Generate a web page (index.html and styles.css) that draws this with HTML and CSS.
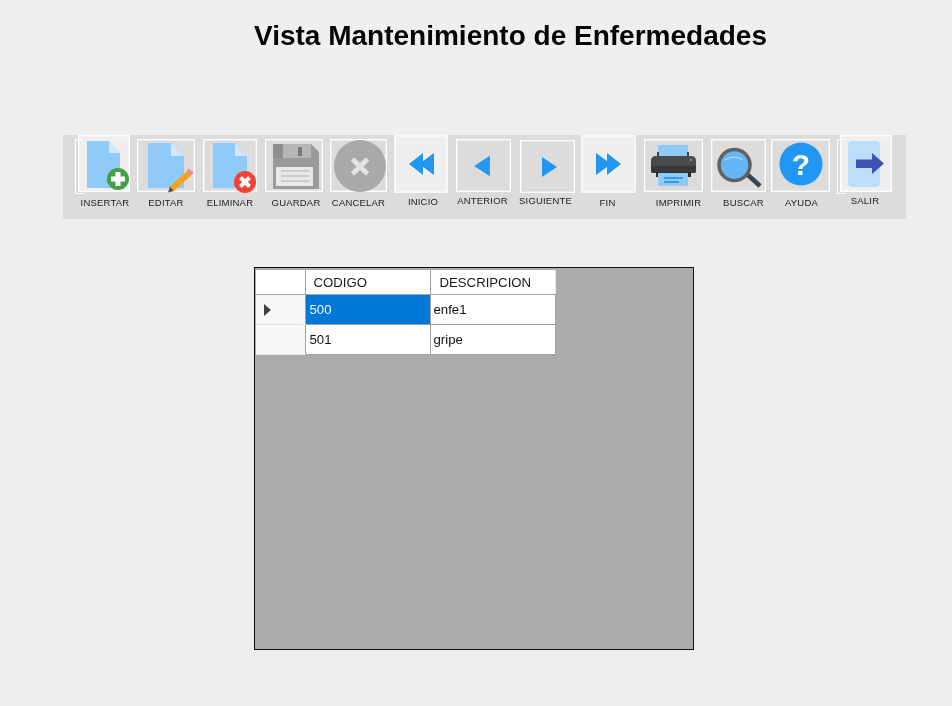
FILE: index.html
```html
<!DOCTYPE html>
<html lang="es">
<head>
<meta charset="utf-8">
<title>Vista Mantenimiento de Enfermedades</title>
<link rel="stylesheet" href="styles.css">
</head>
<body>
<main class="form">
  <h1 class="title">Vista Mantenimiento de Enfermedades</h1>
  <div class="toolbar">
    <div class="tool t-insertar">
      <div class="box hot">
        <svg viewBox="78 135 52 57"><path class="doc" d="M87 141h22l11 12v35H87z"/><path class="fold" d="M109 141l11 12h-11z"/><circle cx="118" cy="179" r="11" fill="#43a047"/><path d="M118 172v14M111 179h14" stroke="#fff" stroke-width="5"/></svg>
      </div>
      <span class="label">INSERTAR</span>
    </div>
    <div class="tool t-editar">
      <div class="box">
        <svg viewBox="137 139 58 53"><path class="doc" d="M148 143h23l13 13v32h-36z"/><path class="fold" d="M171 143l13 13h-13z"/><path d="M170 186.500l16.500-15 4 4.500-16.500 15z" fill="#f9a11b"/><path d="M186.500 171.500l2-3 5 4-3 3.500z" fill="#e88a8a"/><path d="M170 186.500l4 4.500-6 1.500z" fill="#5d5340"/></svg>
      </div>
      <span class="label">EDITAR</span>
    </div>
    <div class="tool t-eliminar">
      <div class="box">
        <svg viewBox="203 139 54 53"><path class="doc" d="M213 143h22l12 13v32h-34z"/><path class="fold" d="M235 143l12 13h-12z"/><circle cx="245" cy="182" r="11" fill="#f44336"/><path d="M240.500 177.500l9 9M249.500 177.500l-9 9" stroke="#fff" stroke-width="4"/></svg>
      </div>
      <span class="label">ELIMINAR</span>
    </div>
    <div class="tool t-guardar">
      <div class="box">
        <svg viewBox="265 139 58 53"><path d="M273 144h38l8 8v37h-46z" fill="#9a9a9a"/><rect x="273" y="144" width="10" height="14" fill="#8e8e8e"/><path d="M283 144h28v14h-28z" fill="#b6b6b6"/><rect x="298" y="147" width="4" height="9" fill="#7a7a7a"/><rect x="276" y="167" width="37" height="19" fill="#e8e8e8"/><path d="M281 171h28M281 176h28M281 181h28" stroke="#c4c4c4" stroke-width="1.500"/></svg>
      </div>
      <span class="label">GUARDAR</span>
    </div>
    <div class="tool t-cancelar">
      <div class="box">
        <svg viewBox="330 139 57 53"><circle cx="360" cy="166" r="26" fill="#a9a9a9"/><path d="M352.500 159l15 15M367.500 159l-15 15" stroke="#e4e4e4" stroke-width="5"/></svg>
      </div>
      <span class="label">CANCELAR</span>
    </div>
    <div class="tool t-inicio">
      <div class="box lit">
        <svg viewBox="394 135 54 58"><path class="arrow" d="M409 164l14-11v22zM419 164l15-11v22z"/></svg>
      </div>
      <span class="label">INICIO</span>
    </div>
    <div class="tool t-anterior">
      <div class="box">
        <svg viewBox="456 139 55 54"><path class="arrow" d="M474 166.500l16-10.500v21z"/></svg>
      </div>
      <span class="label">ANTERIOR</span>
    </div>
    <div class="tool t-siguiente">
      <div class="box">
        <svg viewBox="520 140 55 53"><path class="arrow" d="M542 157l15 10-15 10z"/></svg>
      </div>
      <span class="label">SIGUIENTE</span>
    </div>
    <div class="tool t-fin">
      <div class="box lit">
        <svg viewBox="581 135 55 58"><path class="arrow" d="M596 153l15 11-15 11zM607 153l14 11-14 11z"/></svg>
      </div>
      <span class="label">FIN</span>
    </div>
    <div class="tool t-imprimir">
      <div class="box">
        <svg viewBox="644 139 59 53"><rect x="658" y="145" width="30" height="12" fill="#90caf9"/><path d="M657 152h2v5h-2zM687 152h2v5h-2z" fill="#424242"/><path d="M651 161q0-5 5-5h35q5 0 5 5v10q0 2-2 2h-41q-2 0-2-2z" fill="#4a4a4a"/><path d="M651 166h45v5q0 2-2 2h-41q-2 0-2-2z" fill="#383838"/><rect x="656" y="172" width="35" height="5" fill="#2c2c2c"/><circle cx="691" cy="160" r="1.300" fill="#4caf50"/><rect x="658" y="173" width="30" height="13" fill="#90caf9"/><path d="M664 178h19M664 182h15" stroke="#1e88e5" stroke-width="1.500"/></svg>
      </div>
      <span class="label">IMPRIMIR</span>
    </div>
    <div class="tool t-buscar">
      <div class="box">
        <svg viewBox="711 139 55 53"><path d="M748 175l12 11" stroke="#37474f" stroke-width="4.500"/><circle cx="734.500" cy="165" r="15.500" fill="#64b5f6" stroke="#616161" stroke-width="3.500"/><path d="M725 160q9-6 18 0" fill="none" stroke="#bbdefb" stroke-width="1.200"/></svg>
      </div>
      <span class="label">BUSCAR</span>
    </div>
    <div class="tool t-ayuda">
      <div class="box">
        <svg viewBox="771 139 59 53"><circle cx="801" cy="164" r="21.500" fill="#2196f3"/><text class="help" x="801" y="175">?</text></svg>
      </div>
      <span class="label">AYUDA</span>
    </div>
    <div class="tool t-salir">
      <div class="box hot">
        <svg viewBox="840 135 52 57"><rect x="848" y="141" width="32" height="46" rx="4" fill="#bbdefb"/><path d="M856 159.500h16v-6.500l12 10.500-12 10.500v-6h-16z" fill="#3f51b5"/></svg>
      </div>
      <span class="label">SALIR</span>
    </div>
  </div>

  <div class="grid-view">
    <table class="grid">
      <thead>
        <tr>
          <th class="corner"></th>
          <th class="col-code">CODIGO</th>
          <th class="col-desc">DESCRIPCION</th>
        </tr>
      </thead>
      <tbody>
        <tr>
          <th class="row-head"><span class="caret"></span></th>
          <td class="selected">500</td>
          <td>enfe1</td>
        </tr>
        <tr>
          <th class="row-head"></th>
          <td>501</td>
          <td>gripe</td>
        </tr>
      </tbody>
    </table>
  </div>
</main>
</body>
</html>
```
FILE: styles.css
```css
* { box-sizing: border-box; }

html, body {
  margin: 0;
  height: 100%;
  background: #efefef;
  overflow: hidden;
}

.form {
  height: 706px;
  padding-top: 20px;
  font-family: "Liberation Sans", Arial, sans-serif;
  color: #000;
  filter: blur(0.35px);
}

.title {
  margin: 0 0 0 254px;
  height: 32px;
  font-size: 28px;
  line-height: 32px;
  font-weight: 700;
  white-space: nowrap;
  color: #050505;
}

.toolbar {
  display: flex;
  align-items: flex-start;
  width: 843px;
  height: 84px;
  margin: 83px 0 0 63px;
  padding-left: 15px;
  background: #dcdcdc;
}

.tool {
  display: flex;
  flex-direction: column;
  flex: none;
}

.box {
  position: relative;
  height: 53px;
  margin-top: 4px;
  border: 1px solid #fff;
  box-shadow: inset 0 0 0 1px rgba(255, 255, 255, 0.35);
}

.box svg {
  display: block;
  position: absolute;
  left: -1px;
  top: -1px;
  width: calc(100% + 2px);
  height: calc(100% + 2px);
  overflow: visible;
}

.hot, .lit {
  height: 57px;
  margin-top: 0;
  background: #efefef;
}

.lit { height: 58px; border-width: 2px; border-color: #f8f8f8; box-shadow: none; }
.lit svg { left: -2px; top: -2px; width: calc(100% + 4px); height: calc(100% + 4px); }

.hot::before {
  content: "";
  position: absolute;
  left: -4px;
  top: 3px;
  width: 8px;
  height: 53px;
  border: 1px solid #fff;
  border-right: 0;
}

.label {
  display: flex;
  justify-content: center;
  margin-top: 5px;
  font-size: 9.5px;
  letter-spacing: 0.2px;
  line-height: 12px;
  color: #222;
  white-space: nowrap;
}

.t-insertar  { width: 52px; }
.t-editar    { width: 58px; margin-left: 7px; }
.t-eliminar  { width: 54px; margin-left: 8px; }
.t-guardar   { width: 58px; margin-left: 8px; }
.t-cancelar  { width: 57px; margin-left: 7px; }
.t-inicio    { width: 54px; margin-left: 7px; }
.t-anterior  { width: 55px; margin-left: 8px; }
.t-siguiente { width: 55px; margin-left: 9px; }
.t-fin       { width: 55px; margin-left: 6px; }
.t-imprimir  { width: 59px; margin-left: 8px; }
.t-buscar    { width: 55px; margin-left: 8px; }
.t-ayuda     { width: 59px; margin-left: 5px; }
.t-salir     { width: 52px; margin-left: 10px; }

.t-insertar .label { padding-left: 2px; }
.t-guardar .label  { padding-left: 4px; }
.t-inicio .label   { padding-left: 4px; margin-top: 3px; }
.t-anterior .label { padding-right: 2px; margin-top: 3px; }
.t-siguiente .label { padding-right: 4px; margin-top: 2px; }
.t-siguiente .box { margin-top: 5px; height: 53px; }
.t-fin .label      { padding-right: 2px; margin-top: 4px; }
.t-imprimir .label { padding-left: 10px; }
.t-buscar .label   { padding-left: 10px; }
.t-ayuda .label    { padding-left: 2px; }
.t-salir .label    { padding-right: 2px; margin-top: 3px; }

.doc { fill: #90caf9; }
.fold { fill: #d3e8fb; }
.arrow { fill: #2196f3; }

.help {
  font-family: "Liberation Sans", Arial, sans-serif;
  font-size: 30px;
  font-weight: 700;
  fill: #fff;
  text-anchor: middle;
}

.grid-view {
  width: 440px;
  height: 383px;
  margin: 48px 0 0 254px;
  padding: 2px 0 0 1px;
  background: #ababab;
  border: 1px solid #111;
}

.grid {
  border-collapse: collapse;
  table-layout: fixed;
  width: 299px;
  font-size: 13.2px;
}

.grid th, .grid td {
  padding: 1px 0 0;
  font-weight: 400;
  text-align: left;
  background: #fff;
  border: 1px solid #a0a0a0;
  overflow: hidden;
  white-space: nowrap;
}

.grid thead th {
  height: 24px;
  border-top: 0;
  padding-left: 8px;
  border-bottom-color: #a8a8a8;
  color: #1a1a1a;
}

.grid thead th.col-desc { padding-left: 9px; }

.corner { width: 49px; border-left: 0 !important; }
.col-code { width: 125px; }
.col-desc { width: 125px; border-right: 1px solid #e8e8e8 !important; }

.grid tbody tr { height: 30px; }
.grid td { padding-left: 3px; color: #111; }
.grid td:nth-child(2) { padding-left: 4px; }

.grid .row-head {
  background: #f8f8f8;
  border-left: 0;
  border-top-color: #e4e4e4;
  border-bottom-color: #e4e4e4;
  padding-left: 8px;
}

.grid td.selected {
  background: #0078d7;
  color: #f2f8fd;
}

.caret {
  display: block;
  width: 0;
  height: 0;
  border-left: 7px solid #404040;
  border-top: 6px solid transparent;
  border-bottom: 6px solid transparent;
}
```
